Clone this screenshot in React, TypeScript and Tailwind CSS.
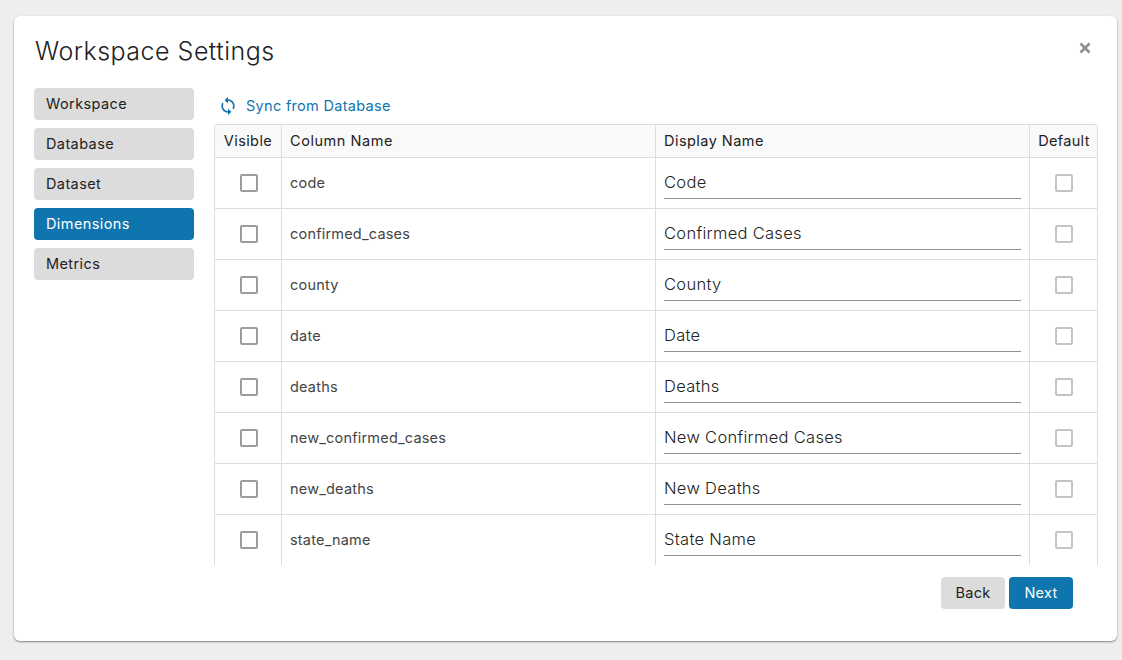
import { MdSync } from 'react-icons/md';

const menuItems = ['Workspace', 'Database', 'Dataset', 'Dimensions', 'Metrics'];

const columns = [
  { name: 'code', display: 'Code' },
  { name: 'confirmed_cases', display: 'Confirmed Cases' },
  { name: 'county', display: 'County' },
  { name: 'date', display: 'Date' },
  { name: 'deaths', display: 'Deaths' },
  { name: 'new_confirmed_cases', display: 'New Confirmed Cases' },
  { name: 'new_deaths', display: 'New Deaths' },
  { name: 'state_name', display: 'State Name' },
];

const rowGrid = 'grid grid-cols-[67px_374px_374px_68px]';

export default function App() {
  return (
    <div className="h-[660px] w-[1122px] overflow-hidden bg-[#eeeeee] px-[14px] pt-4 font-['Inter',sans-serif] text-[#222222]">
      <div className="relative flex h-[625px] w-[1103px] flex-col rounded-md bg-white px-5 shadow-[0_1px_2px_rgba(0,0,0,0.45)]">
        <h1 className="mt-[19px] mb-px ml-px h-[32px] text-[25px] leading-[32px] font-light tracking-[0.5px] text-[#222222]">
          Workspace Settings
        </h1>
        <button type="button" className="absolute top-[24px] right-[25px] text-[#8a8f94]">
          <svg width="14" height="16" viewBox="0 0 14 16">
            <path d="M2.5 3.5 11.5 12.5M11.5 3.5 2.5 12.5" stroke="currentColor" strokeWidth="2.6" />
          </svg>
        </button>

        <div className="mt-5 flex gap-5">
          <nav className="flex w-40 shrink-0 flex-col gap-2">
            {menuItems.map((item) => (
              <div
                key={item}
                className={`flex h-8 items-center rounded-[4px] px-3 text-[14.5px] tracking-[0.4px] ${
                  item === 'Dimensions' ? 'bg-[#0f75af] text-white' : 'bg-[#dcdcdc] text-[#222222]'
                }`}
              >
                {item}
              </div>
            ))}
          </nav>

          <div className="w-[884px]">
            <div className="flex h-9 items-center pl-[4px] text-[14.5px] text-[#0f75af]">
              <MdSync size={20} />
              <span className="ml-[8px] tracking-[0.3px]">Sync from Database</span>
            </div>

            <div className="h-[441px] overflow-hidden rounded-t-[4px] border-x border-t border-[#dddddd]">
              <div className={`${rowGrid} h-[33px] border-b border-[#dddddd] bg-[#f9f9f9] text-[14.5px] leading-[32px]`}>
                <div className="border-r border-[#dddddd] text-center tracking-[0.4px]">Visible</div>
                <div className="border-r border-[#dddddd] pl-2 tracking-[0.55px]">Column Name</div>
                <div className="border-r border-[#dddddd] pl-2 tracking-[0.45px]">Display Name</div>
                <div className="text-center tracking-[0.3px]">Default</div>
              </div>

              {columns.map((column) => (
                <div key={column.name} className={`${rowGrid} h-[51px] border-b border-[#dddddd]`}>
                  <div className="flex items-center justify-center border-r border-[#dddddd] pl-[2px]">
                    <div className="h-[18px] w-[18px] rounded-[2px] border-2 border-[#999ea3]" />
                  </div>
                  <div className="flex items-center border-r border-[#dddddd] pl-2 text-[14.5px] tracking-[0.2px] text-[#444444]">
                    {column.name}
                  </div>
                  <div className="border-r border-[#dddddd] pr-2 pl-2">
                    <div className="mt-[8px] h-[33px] border-b border-[#8f8f8f] text-[16.5px] leading-[32px] font-light tracking-[0.3px] text-[#222222]">
                      {column.display}
                    </div>
                  </div>
                  <div className="flex items-center justify-center">
                    <div className="h-[18px] w-[18px] rounded-[2px] border-2 border-[#c4c4c4]" />
                  </div>
                </div>
              ))}
            </div>
          </div>
        </div>

        <div className="mt-3 flex justify-end gap-1 pr-[24px]">
          <button type="button" className="h-8 w-16 rounded-[4px] bg-[#dcdcdc] text-[14.5px] tracking-[0.3px] text-[#222222]">
            Back
          </button>
          <button type="button" className="h-8 w-16 rounded-[4px] bg-[#0f75af] text-[14.5px] tracking-[0.3px] text-white">
            Next
          </button>
        </div>
      </div>
    </div>
  );
}
